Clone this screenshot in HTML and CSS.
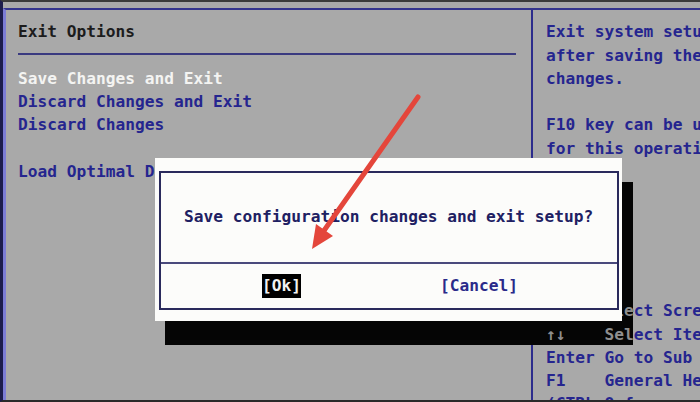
FILE: index.html
```html
<!DOCTYPE html>
<html lang="en">
<head>
  <meta charset="UTF-8" />
  <meta name="viewport" content="width=device-width, initial-scale=1.0" />
  <title>BIOS Exit Options</title>
  <link rel="stylesheet" href="styles.css">
</head>
<body>
  <div class="monitor">
    <div class="frame">
      <section class="menu">
        <div class="row title">Exit Options</div>
        <div class="row sep"></div>
        <div class="row item selected">Save Changes and Exit</div>
        <div class="row item">Discard Changes and Exit</div>
        <div class="row item">Discard Changes</div>
        <div class="row"></div>
        <div class="row item">Load Optimal Defaults</div>
      </section>
      <aside class="help">
        <div class="row">Exit system setup</div>
        <div class="row">after saving the</div>
        <div class="row">changes.</div>
        <div class="row"></div>
        <div class="row">F10 key can be used</div>
        <div class="row">for this operation.</div>
        <div class="row"></div>
        <div class="row"></div>
        <div class="row"></div>
        <div class="row"></div>
        <div class="row"></div>
        <div class="row"></div>
        <div class="row">→←   Select Screen</div>
        <div class="row">↑↓    Select Item</div>
        <div class="row">Enter Go to Sub Screen</div>
        <div class="row">F1    General Help</div>
        <div class="row">(CTRL-Q from remote kbd)</div>
      </aside>
    </div>
  </div>

  <!-- text under the dialog shadow shows dimmed -->
  <div class="shadow">
    <div class="shadow-text">
      <div class="row">→←   Select Screen</div>
      <div class="row">↑↓    Select Item</div>
    </div>
  </div>

  <div class="dialog">
    <div class="dialog-inner">
      <div class="question">Save configuration changes and exit setup?</div>
      <div class="buttons">
        <span class="btn active">[Ok]</span>
        <span class="btn">[Cancel]</span>
      </div>
    </div>
  </div>

  <svg class="arrow" width="700" height="402" viewBox="0 0 700 402">
    <line x1="418" y1="97" x2="323" y2="232" stroke="#e4463b" stroke-width="5" stroke-linecap="round" />
    <polygon points="312,249 333,236 316,224" fill="#e4463b" />
  </svg>
</body>
</html>
```

FILE: styles.css
```css
* {
  margin: 0;
  padding: 0;
  box-sizing: border-box;
}

body {
  width: 700px;
  height: 402px;
  overflow: hidden;
  position: relative;
  background: #a9a9a9;
  font-family: 'DejaVu Sans Mono', 'Liberation Mono', monospace;
  font-size: 16.2px;
  font-weight: bold;
}

.row {
  height: 23.25px;
  line-height: 23.25px;
  white-space: pre;
}

.monitor {
  height: 402px;
  padding-top: 6px;
  border-top: 2px solid #3a3a3a;
  border-left: 3px solid #1c1c4c;
  border-bottom: 2px solid #2a2a2a;
}

.frame {
  height: 100%;
  display: grid;
  grid-template-columns: 525px 1fr;
  border-top: 2px solid #34348c;
  border-left: 3px solid #7c7cd6;
  overflow: hidden;
}

.menu {
  padding: 10.4px 15px 0 12px;
}

.title {
  color: #1c1c1c;
}

.sep {
  display: flex;
  align-items: center;
  padding-bottom: 2px;
}

.sep::after {
  content: '';
  flex: 1;
  height: 2px;
  background: #3a3a80;
}

.item {
  color: #25258f;
}

.item.selected {
  color: #f4f4f2;
}

.help {
  padding: 10.4px 0 0 13px;
  border-left: 2px solid #2c2c8c;
  color: #25258f;
}

.shadow {
  position: absolute;
  left: 165px;
  top: 182px;
  width: 468px;
  height: 163px;
  background: #050505;
  overflow: hidden;
}

.shadow-text {
  position: absolute;
  left: 381px;
  top: 117.4px;
  color: #8e8e8e;
}

.dialog {
  position: absolute;
  left: 155px;
  top: 158px;
  width: 467px;
  height: 163px;
  padding: 13px 3px 11px 4px;
  background: #fcfcfa;
}

.dialog-inner {
  height: 100%;
  display: flex;
  flex-direction: column;
  border: 2px solid #2a2a5c;
  color: #202062;
}

.question {
  height: 89px;
  display: flex;
  align-items: center;
  padding-left: 23px;
  padding-bottom: 2px;
  white-space: pre;
}

.buttons {
  flex: 1;
  display: flex;
  align-items: center;
  gap: 139px;
  padding-left: 101px;
  border-top: 2px solid #4a4a7c;
}

.btn {
  line-height: 24px;
  color: #2a2a8a;
}

.btn.active {
  background: #000;
  color: #f2f2f2;
}

.arrow {
  position: absolute;
  left: 0;
  top: 0;
  pointer-events: none;
}
```
